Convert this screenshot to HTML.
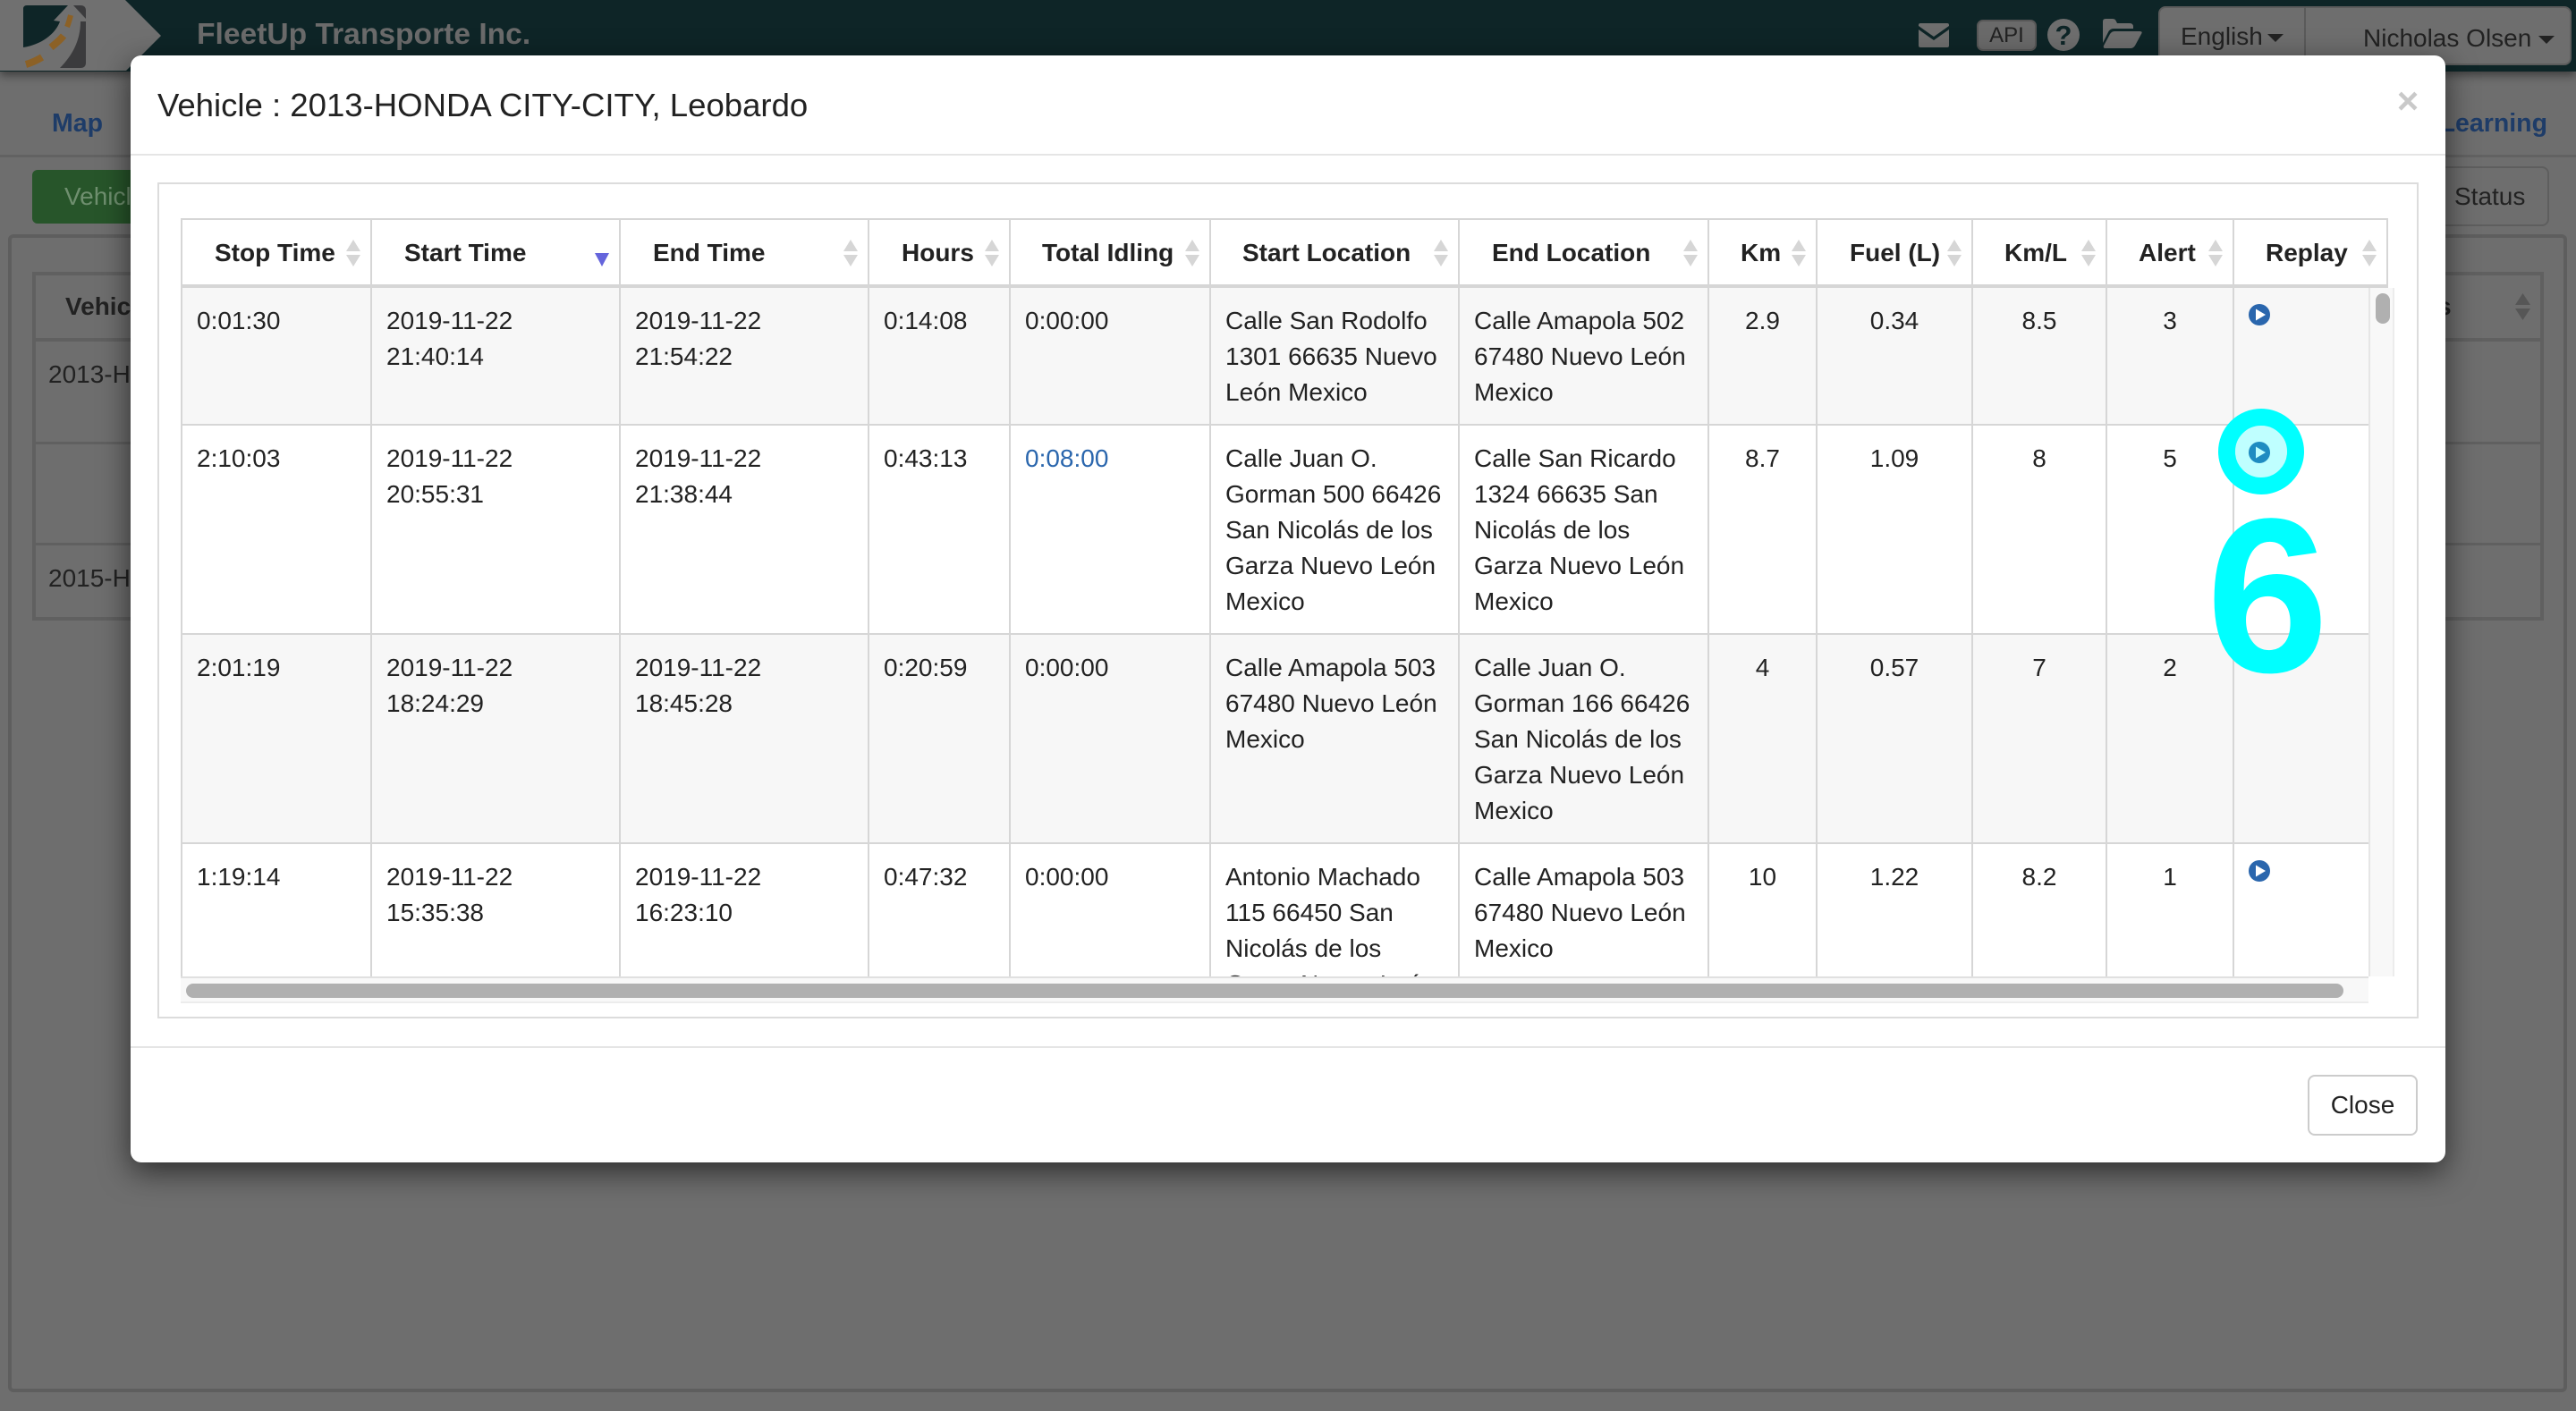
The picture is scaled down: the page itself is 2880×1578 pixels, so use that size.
<!DOCTYPE html>
<html lang="en">
<head>
<meta charset="utf-8">
<title>Vehicle</title>
<style>
*{box-sizing:border-box}
html,body{margin:0;padding:0;width:2880px;height:1578px;overflow:hidden;background:#6e6e6e;font-family:"Liberation Sans",sans-serif;font-size:28px;line-height:40px;color:#222}
.a{position:absolute}
#top{left:0;top:0;width:2880px;height:80px;background:#0e2527;box-shadow:0 4px 10px rgba(0,0,0,.45)}
#brand{left:220px;top:19px;font-weight:bold;font-size:33.600px;line-height:40px;color:#6b6b6b;white-space:nowrap}
.nav{font-weight:bold;font-size:28.500px;color:#1e3c68;white-space:nowrap}
#btnbar{left:2413px;top:7px;width:462px;height:66px;background:#6e6e6e;border:2px solid #5c5c5c;border-radius:8px}
#btnsep{left:2576px;top:7px;width:2px;height:66px;background:#5a5a5a}
.caret{width:0;height:0;border-left:9px solid transparent;border-right:9px solid transparent;border-top:9px solid #222}
#api{left:2210px;top:22px;width:67px;height:35px;background:#6a6a6a;border:2px solid #575757;border-radius:7px;text-align:center;font-size:24px;line-height:31px;color:#222}
#modal{left:146px;top:62px;width:2588px;height:1238px;background:#fff;border-radius:12px;box-shadow:0 10px 34px rgba(0,0,0,.6)}
table{border-collapse:separate;border-spacing:0;table-layout:fixed;position:absolute;left:0;top:0}
th,td{padding:17px 16px 15px;vertical-align:top;text-align:left;font-weight:normal;border-right:2px solid #d6d6d6}
td{border-bottom:2px solid #d6d6d6}
tr>*:first-child{border-left:2px solid #d6d6d6}
th{position:relative;font-weight:bold;background:#fff;border-top:2px solid #d6d6d6;border-bottom:4px solid #d6d6d6;height:78px;white-space:nowrap}
tr.o td{background:#f7f7f7}
tr.e td{background:#fff}
td.c{text-align:center;padding-left:4px;padding-right:4px}
a{color:#2a66ad;text-decoration:none}
.s{position:absolute;right:10px;top:22px;width:17px;height:30px}
.s:before,.s:after{content:"";position:absolute;left:0;width:0;height:0;border-left:8.500px solid transparent;border-right:8.500px solid transparent}
.s:before{top:0;border-bottom:13px solid #d6d6d6}
.s:after{bottom:0;border-top:13px solid #d6d6d6}
.s.d:before{display:none}
.s.d:after{border-top:15px solid #6565dc}
</style>
</head>
<body>

<!-- background page -->
<div class="a" id="top"></div>
<svg class="a" style="left:0;top:0" width="190" height="84" viewBox="0 0 190 84">
  <path d="M0 0H140L180 40L141 79H0Z" fill="#707070"/>
  <path d="M30 6H76L60 23L67 24C62 38 46 50 26 53V10Q26 6 30 6Z" fill="#0e2527"/>
  <path d="M82 6H90Q96 6 96 12V21Z" fill="#3b3b3d"/>
  <path d="M96 24H90C90 45 81 62 67 76H90Q96 76 96 70Z" fill="#3b3b3d"/>
  <path d="M29 72C36 70 42 67 47 64" stroke="#8c6126" stroke-width="8" fill="none"/>
  <path d="M57 53C62 49 67 45 71 40" stroke="#8c6126" stroke-width="8" fill="none"/>
  <path d="M75 30C77 25 78 21 79 17" stroke="#8c6126" stroke-width="6" fill="none"/>
</svg>
<div class="a" id="brand">FleetUp Transporte Inc.</div>

<svg class="a" style="left:2145px;top:26px" width="34" height="27" viewBox="0 0 34 27">
  <path d="M2 0H32Q34 0 34 2V3L17 15L0 3V2Q0 0 2 0Z" fill="#6e6e6e"/>
  <path d="M0 7L17 19L34 7V25Q34 27 32 27H2Q0 27 0 25Z" fill="#6e6e6e"/>
</svg>
<div class="a" id="api">API</div>
<svg class="a" style="left:2289px;top:21px" width="36" height="36" viewBox="0 0 36 36">
  <circle cx="18" cy="18" r="18" fill="#6e6e6e"/>
  <text x="18" y="29" text-anchor="middle" font-family="Liberation Sans" font-weight="bold" font-size="31" fill="#0e2527">?</text>
</svg>
<svg class="a" style="left:2351px;top:21px" width="44" height="33" viewBox="0 0 44 33">
  <path d="M0 3Q0 0 3 0H11Q14 0 15 3L16 5H30Q34 5 34 9V11H12Q8 11 6 15L0 27Z" fill="#6e6e6e"/>
  <path d="M13 14H41Q45 14 43 17L36 30Q34 33 31 33H3Q0 33 1 30L8 17Q10 14 13 14Z" fill="#6e6e6e"/>
</svg>
<div class="a" id="btnbar"></div>
<div class="a" id="btnsep"></div>
<div class="a" style="left:2438px;top:21px;color:#222;white-space:nowrap">English</div>
<div class="a caret" style="left:2535px;top:38px;border-top-color:#222"></div>
<div class="a" style="left:2642px;top:23px;color:#222;white-space:nowrap">Nicholas Olsen</div>
<div class="a caret" style="left:2838px;top:40px"></div>

<div class="a nav" style="left:58px;top:118px">Map</div>
<div class="a nav" style="left:2720px;top:118px;width:128px;text-align:right">Learning</div>
<div class="a" style="left:0;top:173px;width:2880px;height:3px;background:#626262"></div>

<div class="a" style="left:36px;top:190px;width:200px;height:60px;background:#27552a;border-radius:6px;padding:10px 0 0 36px;color:#6f8f6f">Vehicle</div>
<div class="a" style="left:2600px;top:186px;width:250px;height:67px;border:2px solid #5e5e5e;border-radius:8px;background:#6e6e6e;padding:12px 0 0 142px;color:#222">Status</div>

<div class="a" style="left:9px;top:262px;width:2861px;height:1295px;border:4px solid #5e5e5e;border-radius:6px"></div>
<div class="a" style="left:36px;top:304px;width:2808px;height:390px;border:4px solid #606060"></div>
<div class="a" style="left:36px;top:378px;width:2808px;height:4px;background:#606060"></div>
<div class="a" style="left:36px;top:494px;width:2808px;height:3px;background:#606060"></div>
<div class="a" style="left:36px;top:607px;width:2808px;height:3px;background:#606060"></div>
<div class="a" style="left:73px;top:323px;font-weight:bold;color:#222">Vehicle</div>
<div class="a" style="left:54px;top:399px;color:#222">2013-HONDA</div>
<div class="a" style="left:54px;top:627px;color:#222">2015-HONDA</div>
<div class="a" style="left:2725px;top:323px;font-weight:bold;color:#222">s</div>
<svg class="a" style="left:2812px;top:328px" width="17" height="30" viewBox="0 0 17 30"><path d="M8.500 0L17 13H0ZM0 17H17L8.500 30Z" fill="#565656"/></svg>

<!-- modal -->
<div class="a" id="modal"></div>
<div class="a" style="left:176px;top:94px;font-size:36.560px;line-height:48px;color:#222;white-space:nowrap">Vehicle : 2013-HONDA CITY-CITY, Leobardo</div>
<div class="a" style="left:2676px;top:88px;width:32px;text-align:center;font-weight:bold;font-size:42px;line-height:50px;color:#c9c9c9">×</div>
<div class="a" style="left:146px;top:172px;width:2588px;height:2px;background:#e5e5e5"></div>
<div class="a" style="left:146px;top:1170px;width:2588px;height:2px;background:#e5e5e5"></div>
<div class="a" style="left:176px;top:204px;width:2528px;height:935px;border:2px solid #dcdcdc"></div>

<!-- table header -->
<div class="a" style="left:202px;top:244px;width:2468px;height:78px;overflow:hidden">
<table style="width:2468px">
<colgroup><col style="width:214px"><col style="width:278px"><col style="width:278px"><col style="width:158px"><col style="width:224px"><col style="width:278px"><col style="width:279px"><col style="width:121px"><col style="width:174px"><col style="width:150px"><col style="width:142px"><col style="width:172px"></colgroup>
<tr>
<th style="padding-left:36px">Stop Time<span class="s"></span></th>
<th style="padding-left:36px">Start Time<span class="s d"></span></th>
<th style="padding-left:36px">End Time<span class="s"></span></th>
<th style="padding-left:36px">Hours<span class="s"></span></th>
<th style="padding-left:35px">Total Idling<span class="s"></span></th>
<th style="padding-left:35px">Start Location<span class="s"></span></th>
<th style="padding-left:36px">End Location<span class="s"></span></th>
<th style="padding-left:35px">Km<span class="s"></span></th>
<th style="padding-left:36px">Fuel (L)<span class="s"></span></th>
<th style="padding-left:35px">Km/L<span class="s"></span></th>
<th style="padding-left:35px">Alert<span class="s"></span></th>
<th style="padding-left:35px">Replay<span class="s"></span></th>
</tr>
</table>
</div>

<!-- table body -->
<div class="a" style="left:202px;top:322px;width:2448px;height:770px;overflow:hidden">
<table style="width:2448px">
<colgroup><col style="width:214px"><col style="width:278px"><col style="width:278px"><col style="width:158px"><col style="width:224px"><col style="width:278px"><col style="width:279px"><col style="width:121px"><col style="width:174px"><col style="width:150px"><col style="width:142px"><col style="width:152px"></colgroup>
<tr class="o">
<td>0:01:30</td><td>2019-11-22<br>21:40:14</td><td>2019-11-22<br>21:54:22</td><td>0:14:08</td><td>0:00:00</td>
<td style="white-space:nowrap">Calle San Rodolfo<br>1301 66635 Nuevo<br>León Mexico</td>
<td style="white-space:nowrap">Calle Amapola 502<br>67480 Nuevo León<br>Mexico</td>
<td class="c">2.9</td><td class="c">0.34</td><td class="c">8.5</td><td class="c">3</td><td></td>
</tr>
<tr class="e">
<td>2:10:03</td><td>2019-11-22<br>20:55:31</td><td>2019-11-22<br>21:38:44</td><td>0:43:13</td><td><a>0:08:00</a></td>
<td style="white-space:nowrap">Calle Juan O.<br>Gorman 500 66426<br>San Nicolás de los<br>Garza Nuevo León<br>Mexico</td>
<td style="white-space:nowrap">Calle San Ricardo<br>1324 66635 San<br>Nicolás de los<br>Garza Nuevo León<br>Mexico</td>
<td class="c">8.7</td><td class="c">1.09</td><td class="c">8</td><td class="c">5</td><td></td>
</tr>
<tr class="o">
<td>2:01:19</td><td>2019-11-22<br>18:24:29</td><td>2019-11-22<br>18:45:28</td><td>0:20:59</td><td>0:00:00</td>
<td style="white-space:nowrap">Calle Amapola 503<br>67480 Nuevo León<br>Mexico</td>
<td style="white-space:nowrap">Calle Juan O.<br>Gorman 166 66426<br>San Nicolás de los<br>Garza Nuevo León<br>Mexico</td>
<td class="c">4</td><td class="c">0.57</td><td class="c">7</td><td class="c">2</td><td></td>
</tr>
<tr class="e">
<td>1:19:14</td><td>2019-11-22<br>15:35:38</td><td>2019-11-22<br>16:23:10</td><td>0:47:32</td><td>0:00:00</td>
<td style="white-space:nowrap">Antonio Machado<br>115 66450 San<br>Nicolás de los<br>Garza Nuevo León<br>Mexico</td>
<td style="white-space:nowrap">Calle Amapola 503<br>67480 Nuevo León<br>Mexico</td>
<td class="c">10</td><td class="c">1.22</td><td class="c">8.2</td><td class="c">1</td><td></td>
</tr>
</table>
</div>

<!-- scroll tracks -->
<div class="a" style="left:2648px;top:322px;width:29px;height:770px;background:#f8f8f8;border-left:2px solid #e6e6e6;border-right:2px solid #ececec"></div>
<div class="a" style="left:2656px;top:328px;width:16px;height:34px;background:#b0b0b0;border-radius:8px"></div>
<div class="a" style="left:202px;top:1092px;width:2446px;height:30px;background:#f8f8f8;border-top:2px solid #e0e0e0;border-bottom:2px solid #ececec"></div>
<div class="a" style="left:208px;top:1100px;width:2412px;height:16px;background:#b0b0b0;border-radius:8px"></div>

<div class="a" style="left:2580px;top:1202px;width:123px;height:68px;border:2px solid #ccc;border-radius:8px;background:#fff;text-align:center;line-height:64px;color:#222">Close</div>

<!-- icons and annotation overlay -->
<svg class="a" style="left:0;top:0;pointer-events:none" width="2880" height="1578" viewBox="0 0 2880 1578">
  <g fill="#2a66ad">
    <circle cx="2526" cy="352" r="12"/><circle cx="2526" cy="506" r="12"/><circle cx="2526" cy="738" r="12"/><circle cx="2526" cy="974" r="12"/>
  </g>
  <g fill="#fff">
    <path d="M2522 345.500L2533 352L2522 358.500Z"/><path d="M2522 499.500L2533 506L2522 512.500Z"/><path d="M2522 967.500L2533 974L2522 980.500Z"/>
  </g>
  <circle cx="2528" cy="505" r="38.500" fill="none" stroke="#00ffff" stroke-width="19"/>
  <circle cx="2528" cy="505" r="29" fill="#00ffff" fill-opacity=".25"/>
  <text x="2535" y="751" text-anchor="middle" font-family="Liberation Sans" font-weight="bold" font-size="246" fill="#00ffff">6</text>
</svg>

</body>
</html>
